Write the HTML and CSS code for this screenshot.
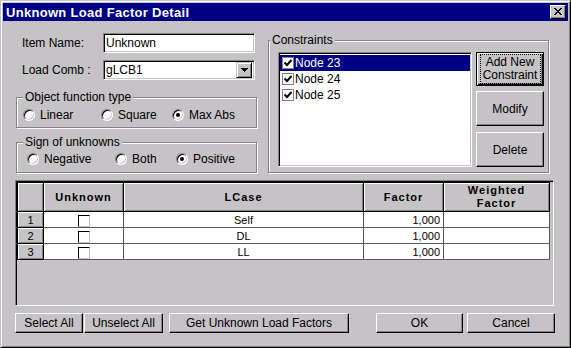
FILE: index.html
```html
<!DOCTYPE html>
<html lang="en">
<head>
    <meta charset="UTF-8">
    <title>Unknown Load Factor Detail</title>
    <link rel="stylesheet" href="styles.css">
</head>
<body>

<div class="window">
    <div class="titlebar">
        <span class="title">Unknown Load Factor Detail</span>
        <span class="close-btn">
            <svg width="8" height="7" viewBox="0 0 8 7" shape-rendering="crispEdges">
                <path d="M0 0h2v1h-2z M6 0h2v1h-2z M1 1h2v1h-2z M5 1h2v1h-2z M2 2h4v1h-4z M3 3h2v1h-2z M2 4h4v1h-4z M1 5h2v1h-2z M5 5h2v1h-2z M0 6h2v1h-2z M6 6h2v1h-2z" fill="#000"/>
            </svg>
        </span>
    </div>

    <div class="top">
        <div class="left-col">
            <div class="field-row">
                <span class="field-label">Item Name:</span>
                <div class="textbox">Unknown</div>
            </div>
            <div class="field-row">
                <span class="field-label">Load Comb :</span>
                <div class="textbox combo">
                    <span>gLCB1</span>
                    <span class="combo-arrow">
                        <svg width="7" height="4" viewBox="0 0 7 4" shape-rendering="crispEdges">
                            <path d="M0 0h7v1h-7z M1 1h5v1h-5z M2 2h3v1h-3z M3 3h1v1h-1z" fill="#000"/>
                        </svg>
                    </span>
                </div>
            </div>

            <div class="group group-obj">
                <span class="group-caption">Object function type</span>
                <div class="radio-row">
                    <label class="radio" style="width:78px"><span class="radio-circle"></span>Linear</label>
                    <label class="radio" style="width:71px"><span class="radio-circle"></span>Square</label>
                    <label class="radio"><span class="radio-circle checked"></span>Max Abs</label>
                </div>
            </div>

            <div class="group group-sign">
                <span class="group-caption">Sign of unknowns</span>
                <div class="radio-row">
                    <label class="radio" style="width:88px"><span class="radio-circle"></span>Negative</label>
                    <label class="radio" style="width:61px"><span class="radio-circle"></span>Both</label>
                    <label class="radio"><span class="radio-circle checked"></span>Positive</label>
                </div>
            </div>
        </div>

        <div class="group constraints">
            <span class="group-caption caption-tight">Constraints</span>
            <div class="listbox">
                <div class="list-item selected"><span class="list-check"><svg width="10" height="10" viewBox="0 0 10 10"><path d="M1.5 4.5 L4 7 L8.5 2" stroke="#000" stroke-width="2" fill="none"/></svg></span>Node 23</div>
                <div class="list-item"><span class="list-check"><svg width="10" height="10" viewBox="0 0 10 10"><path d="M1.5 4.5 L4 7 L8.5 2" stroke="#000" stroke-width="2" fill="none"/></svg></span>Node 24</div>
                <div class="list-item"><span class="list-check"><svg width="10" height="10" viewBox="0 0 10 10"><path d="M1.5 4.5 L4 7 L8.5 2" stroke="#000" stroke-width="2" fill="none"/></svg></span>Node 25</div>
            </div>
            <div class="side-buttons">
                <div class="btn btn-default"><span class="focus-rect">Add New<br>Constraint</span></div>
                <div class="btn btn-modify">Modify</div>
                <div class="btn btn-delete">Delete</div>
            </div>
        </div>
    </div>

    <div class="grid-area">
        <div class="grid">
            <div class="hcell"></div>
            <div class="hcell">Unknown</div>
            <div class="hcell">LCase</div>
            <div class="hcell">Factor</div>
            <div class="hcell">Weighted<br>Factor</div>

            <div class="rcell">1</div>
            <div class="dcell center"><span class="grid-check"></span></div>
            <div class="dcell center">Self</div>
            <div class="dcell num">1,000</div>
            <div class="dcell"></div>

            <div class="rcell">2</div>
            <div class="dcell center"><span class="grid-check"></span></div>
            <div class="dcell center">DL</div>
            <div class="dcell num">1,000</div>
            <div class="dcell"></div>

            <div class="rcell">3</div>
            <div class="dcell center"><span class="grid-check"></span></div>
            <div class="dcell center">LL</div>
            <div class="dcell num">1,000</div>
            <div class="dcell"></div>
        </div>
    </div>

    <div class="bottom-bar">
        <div class="btn" style="width:68px">Select All</div>
        <div class="btn" style="width:79px; margin-left:1px">Unselect All</div>
        <div class="btn" style="width:180px; margin-left:6px">Get Unknown Load Factors</div>
        <div class="btn" style="width:87px; margin-left:27px">OK</div>
        <div class="btn" style="width:88px; margin-left:4px">Cancel</div>
    </div>
</div>

</body>
</html>
```

FILE: styles.css
```css
:root {
    --face: #c6c3c6;
    --shadow: #848284;
    --light: #ffffff;
    --navy: #000084;
    --gridline: #5a595a;
}

* {
    box-sizing: border-box;
    margin: 0;
    padding: 0;
}

body {
    font-family: "Liberation Sans", Arial, sans-serif;
    font-size: 12px;
    color: #000;
    background: var(--face);
}

.window {
    width: 571px;
    height: 348px;
    background: var(--face);
    border: 1px solid;
    border-color: var(--face) #000 #000 var(--face);
    box-shadow: inset 1px 1px var(--light), inset -1px -1px var(--shadow);
    padding: 2px;
}

/* title bar */
.titlebar {
    height: 18px;
    background: var(--navy);
    display: flex;
    align-items: center;
    justify-content: space-between;
    padding: 0 2px 0 3px;
}

.title {
    color: #fff;
    font-weight: bold;
    font-size: 13px;
    letter-spacing: 0.3px;
}

.close-btn {
    width: 16px;
    height: 14px;
    background: var(--face);
    border: 1px solid;
    border-color: var(--light) #000 #000 var(--light);
    box-shadow: inset -1px -1px var(--shadow);
    display: flex;
    align-items: center;
    justify-content: center;
    padding-bottom: 1px;
}

/* top section */
.top {
    display: flex;
    gap: 10px;
    height: 152px;
    margin-left: 13px;
}

.left-col {
    width: 242px;
}

.field-row {
    display: flex;
    align-items: center;
    height: 20px;
    margin-top: 7px;
}

.field-row:first-child {
    margin-top: 12px;
}

.field-label {
    width: 87px;
    padding-left: 6px;
}

.textbox {
    width: 152px;
    height: 20px;
    background: #fff;
    border: 1px solid;
    border-color: var(--shadow) var(--light) var(--light) var(--shadow);
    box-shadow: inset 1px 1px #000, inset -1px -1px var(--face);
    padding-left: 2px;
    line-height: 18px;
}

.combo {
    display: flex;
    align-items: center;
    justify-content: space-between;
    padding-right: 2px;
}

.combo-arrow {
    width: 16px;
    height: 16px;
    background: var(--face);
    border: 1px solid;
    border-color: var(--face) #000 #000 var(--face);
    box-shadow: inset 1px 1px var(--light), inset -1px -1px var(--shadow);
    display: flex;
    align-items: center;
    justify-content: center;
}

/* group boxes */
.group {
    position: relative;
    border: 1px solid var(--shadow);
    box-shadow: inset 1px 1px var(--light), 1px 1px var(--light);
}

.group-caption {
    position: absolute;
    top: -8px;
    left: 6px;
    padding: 0 2px;
    line-height: 14px;
    background: var(--face);
}

.caption-tight {
    left: 1px;
}

.group-obj {
    margin-top: 17px;
    width: 241px;
    height: 31px;
    padding: 10px 0 0 6px;
}

.group-sign {
    margin-top: 14px;
    width: 241px;
    height: 31px;
    padding: 9px 0 0 10px;
}

.radio-row {
    display: flex;
    align-items: center;
    height: 14px;
}

.radio {
    display: flex;
    align-items: center;
    gap: 5px;
}

.radio-circle {
    width: 12px;
    height: 12px;
    border-radius: 50%;
    background: #fff;
    border: 1px solid;
    border-color: var(--shadow) var(--light) var(--light) var(--shadow);
    box-shadow: inset 1px 1px #000, inset -1px -1px var(--face);
    display: flex;
    align-items: center;
    justify-content: center;
}

.radio-circle.checked::after {
    content: '';
    width: 4px;
    height: 4px;
    border-radius: 50%;
    background: #000;
}

/* constraints */
.constraints {
    margin-top: 19px;
    width: 281px;
    height: 133px;
    padding: 11px 0 0 9px;
    display: flex;
    gap: 4px;
}

.listbox {
    width: 194px;
    height: 115px;
    background: #fff;
    border: 1px solid;
    border-color: var(--shadow) var(--light) var(--light) var(--shadow);
    box-shadow: inset 1px 1px #000, inset -1px -1px var(--face);
    padding: 2px 1px 1px 1px;
}

.list-item {
    display: flex;
    align-items: center;
    height: 16px;
    padding-left: 2px;
}

.list-item.selected {
    background: var(--navy);
    color: #fff;
}

.list-check {
    width: 12px;
    height: 12px;
    background: #fff;
    border: 1px solid var(--shadow);
    display: flex;
    margin-right: 1px;
}

.side-buttons {
    display: flex;
    flex-direction: column;
}

.btn {
    height: 20px;
    background: var(--face);
    border: 1px solid;
    border-color: var(--light) #000 #000 var(--light);
    box-shadow: inset -1px -1px var(--shadow);
    display: flex;
    align-items: center;
    justify-content: center;
    text-align: center;
}

.btn-default {
    width: 68px;
    height: 34px;
    border-color: #000;
    box-shadow: inset 1px 1px var(--light), inset -1px -1px #000, inset -2px -2px var(--shadow);
}

.focus-rect {
    width: 61px;
    height: 30px;
    border: 1px dotted #000;
    line-height: 13px;
    display: flex;
    align-items: center;
    justify-content: center;
}

.btn-modify {
    width: 68px;
    height: 35px;
    margin-top: 5px;
}

.btn-delete {
    width: 68px;
    height: 35px;
    margin-top: 6px;
}

/* grid */
.grid-area {
    margin: 7px 0 0 12px;
    width: 539px;
    height: 126px;
    border: 1px solid;
    border-color: var(--shadow) var(--light) var(--light) var(--shadow);
    box-shadow: inset 1px 1px #000;
    padding: 1px 0 0 1px;
}

.grid {
    display: grid;
    grid-template-columns: 26px 80px 240px 80px 106px;
    grid-template-rows: 29px 16px 16px 16px;
    width: 533px;
    border-top: 1px solid #000;
    border-left: 1px solid #000;
    font-size: 11px;
}

.hcell,
.rcell {
    background: var(--face);
    border-right: 1px solid #000;
    border-bottom: 1px solid #000;
    box-shadow: inset 1px 1px var(--light), inset -1px -1px var(--shadow);
    display: flex;
    align-items: center;
    justify-content: center;
    text-align: center;
}

.hcell {
    font-weight: bold;
    letter-spacing: 1px;
    line-height: 13px;
}

.rcell {
    line-height: 14px;
}

.dcell {
    background: #fff;
    border-right: 1px solid var(--gridline);
    border-bottom: 1px solid var(--gridline);
    display: flex;
    align-items: center;
    line-height: 14px;
}

.dcell.center {
    justify-content: center;
}

.dcell.num {
    justify-content: flex-end;
    padding-right: 3px;
}

.grid-check {
    width: 12px;
    height: 12px;
    background: #fff;
    border: 1px solid;
    border-color: #000 var(--face) var(--face) #000;
    margin-top: 2px;
}

/* bottom buttons */
.bottom-bar {
    display: flex;
    height: 20px;
    margin: 7px 0 0 12px;
}
```
